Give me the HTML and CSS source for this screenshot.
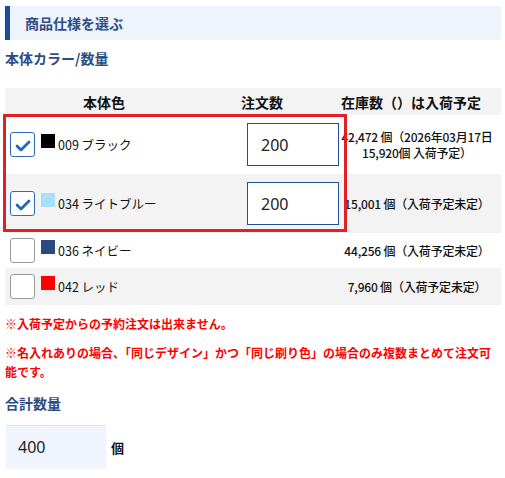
FILE: index.html
```html
<!DOCTYPE html>
<html lang="ja">
<head>
<meta charset="utf-8">
<link rel="stylesheet" href="styles.css">
</head>
<body>
<div class="page">
  <h2 class="section-title">商品仕様を選ぶ</h2>
  <h3 class="sub-title">本体カラー/数量</h3>

  <div class="table">
    <div class="thead">
      <div class="th c1">本体色</div>
      <div class="th c2">注文数</div>
      <div class="th c3">在庫数（）は入荷予定</div>
    </div>

    <div class="row">
      <div class="cell-color">
        <span class="check checked"><svg viewBox="0 0 25 25" width="25" height="25"><path d="M7 14 L11 18 L19 10" fill="none" stroke="#1f68b8" stroke-width="2.8" stroke-linecap="round" stroke-linejoin="round"/></svg></span>
        <span class="swatch sw-black"></span>
        <span class="name">009 ブラック</span>
      </div>
      <div class="cell-qty"><input class="qty" type="text" value="200"></div>
      <div class="cell-stock">42,472 個（2026年03月17日<br>15,920個 入荷予定）</div>
    </div>

    <div class="row alt">
      <div class="cell-color">
        <span class="check checked"><svg viewBox="0 0 25 25" width="25" height="25"><path d="M7 14 L11 18 L19 10" fill="none" stroke="#1f68b8" stroke-width="2.8" stroke-linecap="round" stroke-linejoin="round"/></svg></span>
        <span class="swatch sw-lightblue"></span>
        <span class="name">034 ライトブルー</span>
      </div>
      <div class="cell-qty"><input class="qty" type="text" value="200"></div>
      <div class="cell-stock">15,001 個（入荷予定未定）</div>
    </div>

    <div class="row short">
      <div class="cell-color">
        <span class="check"></span>
        <span class="swatch sw-navy"></span>
        <span class="name">036 ネイビー</span>
      </div>
      <div class="cell-qty"></div>
      <div class="cell-stock">44,256 個（入荷予定未定）</div>
    </div>

    <div class="row alt short">
      <div class="cell-color">
        <span class="check"></span>
        <span class="swatch sw-red"></span>
        <span class="name">042 レッド</span>
      </div>
      <div class="cell-qty"></div>
      <div class="cell-stock">7,960 個（入荷予定未定）</div>
    </div>

    <div class="highlight"></div>
  </div>

  <p class="note note-first">※入荷予定からの予約注文は出来ません。</p>
  <p class="note">※名入れありの場合、「同じデザイン」かつ「同じ刷り色」の場合のみ複数まとめて注文可能です。</p>

  <h3 class="sub-title total-title">合計数量</h3>
  <div class="total">
    <div class="total-box">400</div>
    <span class="unit">個</span>
  </div>
</div>
</body>
</html>
```

FILE: styles.css
```css
* { box-sizing: border-box; }
html, body { margin: 0; padding: 0; background: #fff; }
body {
  font-family: "Noto Sans CJK JP", "Noto Sans", sans-serif;
  color: #111;
}
.page {
  width: 496px;
  margin-left: 5px;
  padding-top: 6px;
}
.section-title {
  margin: 0;
  height: 34px;
  border-left: 5px solid #1b4e98;
  background: #eff3fc;
  padding-left: 15px;
  font-size: 14px;
  line-height: 34px;
  font-weight: bold;
  color: #2c4d84;
}
.sub-title {
  margin: 8px 0 0;
  font-size: 14px;
  line-height: 20px;
  font-weight: bold;
  color: #2c4d84;
}
.table {
  position: relative;
  margin-top: 20px;
}
.thead {
  display: grid;
  grid-template-columns: 198px 118px 1fr;
  height: 27px;
  background: #f3f3f3;
  align-items: center;
}
.th {
  text-align: center;
  font-size: 14px;
  font-weight: bold;
  color: #111;
}
.row {
  display: grid;
  grid-template-columns: 237px 92px 1fr;
  align-items: center;
  padding: 5px 0 5px 5px;
  background: #fff;
}
.row.alt { background: #f3f3f3; }
.row.short { min-height: 35px; }
.row.alt.short { min-height: 37px; }
.cell-color {
  display: flex;
  align-items: center;
}
.check {
  width: 25px;
  height: 25px;
  border: 1px solid #9a9a9a;
  border-radius: 3px;
  background: #fff;
  display: flex;
  align-items: center;
  justify-content: center;
  flex: none;
}
.check.checked { border-color: #2b6cb6; }
.check svg { display: block; flex: none; }
.swatch {
  width: 14px;
  height: 14px;
  margin-left: 6px;
  margin-bottom: 7px;
  flex: none;
}
.sw-black { background: #000; }
.sw-lightblue { background: #a6e0fb; }
.sw-navy { background: #2a4a80; }
.sw-red { background: #ff0000; }
.name {
  margin-left: 3px;
  font-size: 12.5px;
  color: #111;
}
.cell-qty { display: flex; }
.qty {
  width: 92px;
  height: 43px;
  margin: 3px 0;
  border: 1px solid #1f4f96;
  border-radius: 0;
  background: #fff;
  padding: 0 0 0 13px;
  font-family: "Noto Sans", "Open Sans", sans-serif;
  font-size: 16px;
  color: #222;
  outline: none;
}
.cell-stock {
  text-align: center;
  font-size: 12px;
  line-height: 16px;
  color: #111;
  font-weight: 500;
  white-space: nowrap;
  letter-spacing: -0.2px;
  padding-right: 6px;
}
.highlight {
  position: absolute;
  left: -2px;
  top: 26px;
  width: 344px;
  height: 118px;
  border: 3px solid #e21f24;
  pointer-events: none;
}
.note {
  margin: 10px 0 0;
  font-size: 12px;
  line-height: 19px;
  color: #ff0000;
  font-weight: bold;
}
.note-first { margin-top: 9px; }
.total-title { margin-top: 12px; }
.total {
  display: flex;
  align-items: center;
  margin-top: 12px;
}
.total-box {
  width: 100px;
  height: 44px;
  margin-left: 1px;
  background: #f0f4fc;
  border-top: 1px solid #dde0ea;
  padding-left: 12px;
  font-family: "Noto Sans", "Open Sans", sans-serif;
  font-size: 16px;
  line-height: 42px;
  color: #222;
}
.unit {
  margin-left: 5px;
  font-size: 13px;
  font-weight: bold;
  color: #111;
}
```
